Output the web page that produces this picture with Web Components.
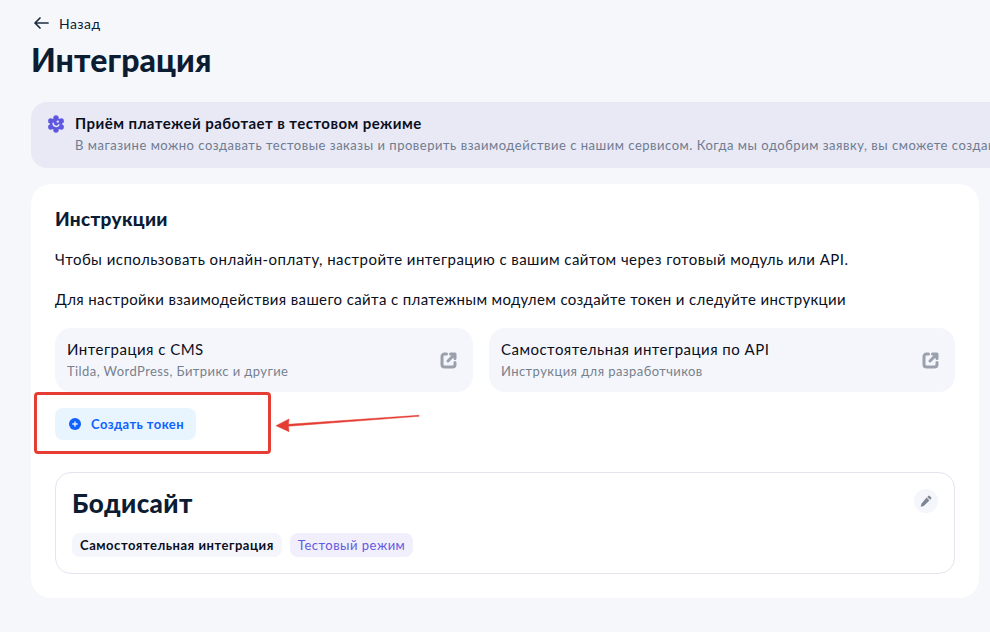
<!DOCTYPE html>
<html lang="ru">
<head>
<meta charset="utf-8">
<title>Интеграция</title>
<style>
	html, body { margin: 0; height: 100%; overflow: hidden; background: #f6f7fb; }
	body { font-family: "Lato", "Noto Sans", sans-serif; color: #0b1c33; }
</style>
</head>
<body>
<integration-page></integration-page>

<script>
class BackLink extends HTMLElement {
	constructor() {
		super();
		this.attachShadow({ mode: "open" });
		this.shadowRoot.innerHTML = `
            <style>
                :host { display: flex; align-items: center; gap: 10px; height: 16px; margin-left: 2px; font-size: 14px; letter-spacing: .45px; color: #0b1c33; }
                svg { width: 16px; height: 16px; display: block; }
            </style>
            <svg viewBox="0 0 16 16" fill="none" stroke="#1f2d42" stroke-width="1.7" stroke-linecap="round" stroke-linejoin="round">
                <path d="M15 8H2M7 3 2 8l5 5"/>
            </svg>
            <slot></slot>`;
	}
}
customElements.define("back-link", BackLink);

class NoticeBanner extends HTMLElement {
	constructor() {
		super();
		this.attachShadow({ mode: "open" });
		this.shadowRoot.innerHTML = `
            <style>
                :host { display: flex; gap: 10px; width: 1140px; height: 66px; box-sizing: border-box; padding: 12px 16px; background: #e8e9f5; border-radius: 16px; }
                svg { width: 18px; height: 18px; flex: none; margin-top: 1px; }
                .title { font-size: 15px; font-weight: 700; line-height: 19px; color: #0a0f1e; white-space: nowrap; letter-spacing: .45px; }
                .text { font-size: 13px; line-height: 20px; margin-top: 2px; color: #6f7b90; white-space: nowrap; letter-spacing: .52px; }
            </style>
            <svg viewBox="0 0 18 18">
                <g fill="#5f57e0">
                    <circle cx="9" cy="9" r="6"/>
                    <circle cx="9" cy="3" r="2.700"/>
                    <circle cx="9" cy="15" r="2.700"/>
                    <circle cx="3.800" cy="6" r="2.700"/>
                    <circle cx="14.200" cy="6" r="2.700"/>
                    <circle cx="3.800" cy="12" r="2.700"/>
                    <circle cx="14.200" cy="12" r="2.700"/>
                </g>
                <path d="M6.200 8.200a3 3 0 0 0 5.700 1.500" fill="none" stroke="#e8e9f5" stroke-width="1.500" stroke-linecap="round"/>
                <circle cx="10.800" cy="6.600" r="1.200" fill="#e8e9f5"/>
            </svg>
            <div>
                <div class="title"><slot name="title"></slot></div>
                <div class="text"><slot></slot></div>
            </div>`;
	}
}
customElements.define("notice-banner", NoticeBanner);

class LinkCard extends HTMLElement {
	constructor() {
		super();
		this.attachShadow({ mode: "open" });
		this.shadowRoot.innerHTML = `
            <style>
                :host { display: flex; align-items: center; justify-content: space-between; box-sizing: border-box; height: 64px; padding: 0 15px 2px 12px; background: #f5f6fb; border-radius: 16px; }
                .name { font-size: 15px; line-height: 20px; color: #0a0f1e; letter-spacing: .48px; }
                .hint { font-size: 13px; line-height: 18px; margin-top: 3px; color: #76818f; letter-spacing: .42px; }
                svg { width: 18px; height: 18px; flex: none; margin-top: 2px; }
            </style>
            <div>
                <div class="name"><slot name="name"></slot></div>
                <div class="hint"><slot></slot></div>
            </div>
            <svg viewBox="0 0 18 18" fill="none" stroke="#9aa1ad" stroke-width="3" stroke-linecap="round" stroke-linejoin="round">
                <path d="M6.500 3H4.500A2.500 2.500 0 0 0 2 5.500v8A2.500 2.500 0 0 0 4.500 16h8a2.500 2.500 0 0 0 2.500-2.500V11.500"/>
                <path d="M8 10 14.500 3.500M10.500 3H15V7.500"/>
            </svg>`;
	}
}
customElements.define("link-card", LinkCard);

class TokenButton extends HTMLElement {
	constructor() {
		super();
		this.attachShadow({ mode: "open" });
		this.shadowRoot.innerHTML = `
            <style>
                :host { display: inline-flex; align-items: center; gap: 10px; box-sizing: border-box; height: 32px; padding: 0 12px 0 14px; background: #e8f5fe; border-radius: 8px; font-size: 13px; font-weight: 700; color: #0f62fe; letter-spacing: .42px; }
                svg { width: 12px; height: 12px; }
            </style>
            <svg viewBox="0 0 12 12">
                <circle cx="6" cy="6" r="6" fill="#0f62fe"/>
                <path d="M6 3.800v4.400M3.800 6h4.400" stroke="#e8f5fe" stroke-width="1.300" stroke-linecap="round"/>
            </svg>
            <slot></slot>`;
	}
}
customElements.define("token-button", TokenButton);

class TagChip extends HTMLElement {
	constructor() {
		super();
		this.attachShadow({ mode: "open" });
		this.shadowRoot.innerHTML = `
            <style>
                :host { display: inline-flex; align-items: center; height: 24px; padding: 0 8px; border-radius: 8px; font-size: 13px; font-weight: 700; background: #f5f6fb; color: #0a0f1e; letter-spacing: .53px; }
                :host([test]) { background: #f1effc; color: #625ae0; font-weight: 400; letter-spacing: .5px; }
            </style>
            <slot></slot>`;
	}
}
customElements.define("tag-chip", TagChip);

class SiteCard extends HTMLElement {
	constructor() {
		super();
		this.attachShadow({ mode: "open" });
		this.shadowRoot.innerHTML = `
            <style>
                :host { display: block; position: relative; box-sizing: border-box; height: 102px; padding: 14px 16px 16px; border: 1px solid #e3e5f1; border-radius: 16px; }
                h3 { margin: 0; font-size: 26px; line-height: 32px; font-weight: 900; color: #0b1c33; letter-spacing: .4px; }
                .tags { display: flex; gap: 8px; margin-top: 14px; }
                .edit { position: absolute; top: 16px; right: 16px; width: 24px; height: 24px; border-radius: 50%; background: #f5f6fb; display: flex; align-items: center; justify-content: center; }
                svg { width: 12px; height: 12px; }
            </style>
            <h3><slot name="name"></slot></h3>
            <div class="tags"><slot></slot></div>
            <div class="edit">
                <svg viewBox="0 0 12 12"><path fill="#7d8694" d="M8.300.900a1 1 0 0 1 1.400 0l1.400 1.400a1 1 0 0 1 0 1.400l-1 1-2.800-2.800zM6.600 2.600l2.800 2.800-5.700 5.700-3 .7.700-3z"/></svg>
            </div>`;
	}
}
customElements.define("site-card", SiteCard);

class IntegrationPage extends HTMLElement {
	constructor() {
		super();
		this.attachShadow({ mode: "open" });
		this.shadowRoot.innerHTML = `
            <style>
                :host { display: block; position: relative; height: 632px; box-sizing: border-box; padding: 15px 11px 0 31px; color: #0b1c33; }
                h1 { margin: 9px 0 0 0; font-size: 32px; line-height: 40px; font-weight: 900; letter-spacing: .1px; }
                notice-banner { margin-top: 22px; }
                .card { margin-top: 16px; height: 414px; box-sizing: border-box; padding: 24px; background: #fff; border-radius: 20px; }
                h2 { margin: 0; font-size: 19px; line-height: 22px; font-weight: 900; letter-spacing: .3px; }
                p { margin: 0; font-size: 15px; line-height: 20px; color: #0a0f1e; }
                .p1 { margin-top: 19px; letter-spacing: .45px; }
                .p2 { margin-top: 20px; letter-spacing: .37px; }
                .links { display: grid; grid-template-columns: 418px 466px; gap: 16px; margin-top: 19px; }
                .action { margin-top: 16px; height: 32px; }
                site-card { margin-top: 32px; }
                .mark { position: absolute; left: 34px; top: 392px; width: 237px; height: 62px; box-sizing: border-box; border: 3px solid #e53d33; border-radius: 4px; }
                .arrow { position: absolute; left: 270px; top: 405px; width: 155px; height: 30px; }
            </style>
            <back-link>Назад</back-link>
            <h1>Интеграция</h1>
            <notice-banner>
                <span slot="title">Приём платежей работает в тестовом режиме</span>
                В магазине можно создавать тестовые заказы и проверить взаимодействие с нашим сервисом. Когда мы одобрим заявку, вы сможете создавать реальные заказы
            </notice-banner>
            <section class="card">
                <h2>Инструкции</h2>
                <p class="p1">Чтобы использовать онлайн-оплату, настройте интеграцию с вашим сайтом через готовый модуль или API.</p>
                <p class="p2">Для настройки взаимодействия вашего сайта с платежным модулем создайте токен и следуйте инструкции</p>
                <div class="links">
                    <link-card><span slot="name">Интеграция с CMS</span>Tilda, WordPress, Битрикс и другие</link-card>
                    <link-card><span slot="name">Самостоятельная интеграция по API</span>Инструкция для разработчиков</link-card>
                </div>
                <div class="action"><token-button>Создать токен</token-button></div>
                <site-card>
                    <span slot="name">Бодисайт</span>
                    <tag-chip>Самостоятельная интеграция</tag-chip>
                    <tag-chip test>Тестовый режим</tag-chip>
                </site-card>
            </section>
            <div class="mark"></div>
            <svg class="arrow" viewBox="0 0 155 30">
                <path d="M149 10.300 18.500 19.300 19 14 6 20.700 19 26.700 18.500 21.200 149 11.300z" fill="#e53d33" stroke="#e53d33" stroke-width=".5" stroke-linejoin="round"/>
            </svg>`;
	}
}
customElements.define("integration-page", IntegrationPage);
</script>
</body>
</html>
